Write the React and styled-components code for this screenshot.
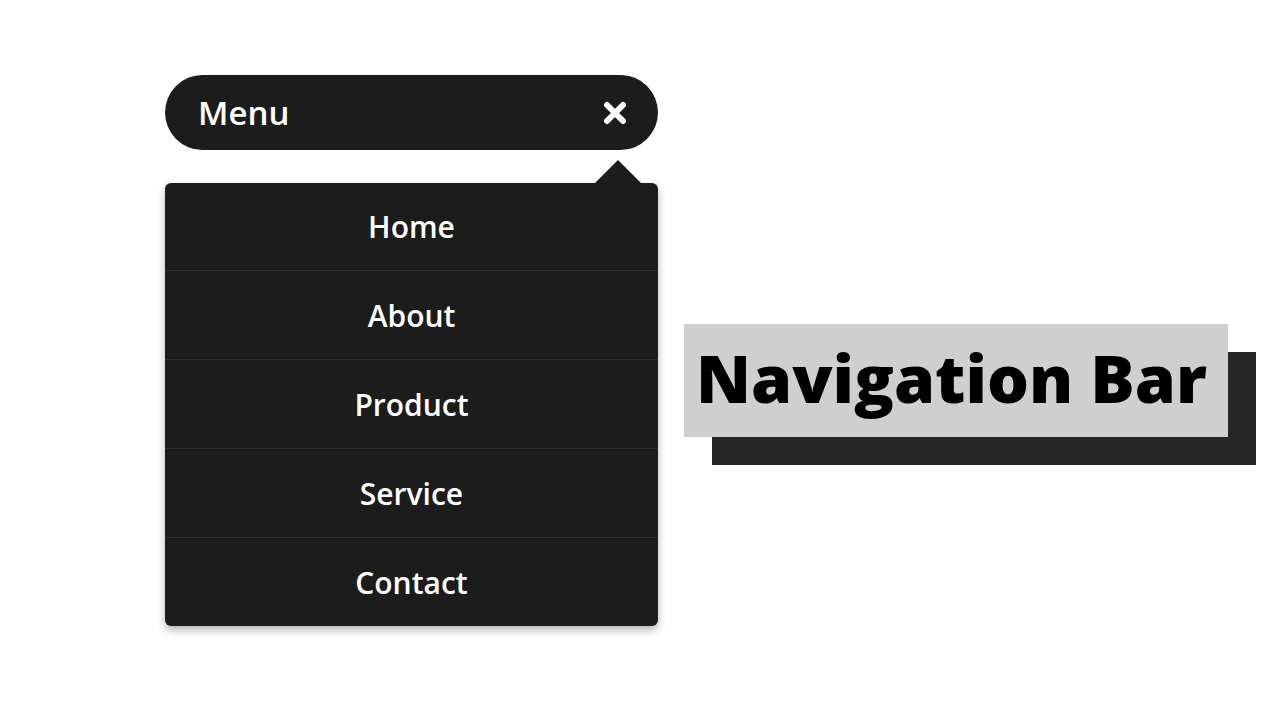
import styled, { createGlobalStyle } from "styled-components";

const Global = createGlobalStyle`
  html, body {
    margin: 0;
    padding: 0;
    background: #ffffff;
    font-family: "Open Sans", "Liberation Sans", sans-serif;
  }
`

const Page = styled.div`
  width: 1280px;
  height: 720px;
  box-sizing: border-box;
  padding: 75px 0 0 165px;
  display: flex;
  align-items: flex-start;
  gap: 26px;
`

const Nav = styled.nav`
  width: 493px;
  display: flex;
  flex-direction: column;
`

const Bar = styled.div`
  height: 75px;
  border-radius: 38px;
  background: #1c1c1c;
  display: flex;
  align-items: center;
  justify-content: space-between;
  padding: 0 31px 0 33px;
  color: #fff;
  font-size: 33px;
  font-weight: 600;
`

const Close = styled.svg`
  width: 24px;
  height: 24px;
  display: block;
`

const Dropdown = styled.ul`
  position: relative;
  margin: 33px 0 0;
  padding: 0;
  list-style: none;
  background: #1c1c1c;
  border-radius: 6px;
  box-shadow: 0 4px 8px rgba(0, 0, 0, 0.3);

  &::before {
    content: "";
    position: absolute;
    bottom: 100%;
    right: 17px;
    border-left: 23px solid transparent;
    border-right: 23px solid transparent;
    border-bottom: 23px solid #1c1c1c;
  }
`

const Item = styled.li`
  display: flex;
  align-items: center;
  justify-content: center;
  color: #fff;
  font-size: 30px;
  font-weight: 600;
  border-top: ${({ first }) => (first ? "none" : "1px solid #2c2c2c")};
  box-sizing: border-box;
  height: ${({ first }) => (first ? "87px" : "89px")};
`

const Title = styled.h1`
  margin: 249px 0 0;
  width: 544px;
  height: 113px;
  box-sizing: border-box;
  padding: 0 0 8px 12px;
  display: flex;
  align-items: center;
  background: #cfcfcf;
  box-shadow: 28px 28px 0 #252525;
  color: #000;
  font-size: 66px;
  font-weight: 800;
  white-space: nowrap;
`

const links = ["Home", "About", "Product", "Service", "Contact"];

const App = () => {
  return (
    <Page>
      <Global />
      <Nav>
        <Bar>
          <span>Menu</span>
          <Close viewBox="0 0 24 24">
            <path d="M4 4 L20 20 M20 4 L4 20" stroke="#fff" strokeWidth="6" strokeLinecap="round" />
          </Close>
        </Bar>
        <Dropdown>
          {links.map((l, i) => (
            <Item key={l} first={i === 0}>{l}</Item>
          ))}
        </Dropdown>
      </Nav>
      <Title>Navigation Bar</Title>
    </Page>
  );
};

export default App;
